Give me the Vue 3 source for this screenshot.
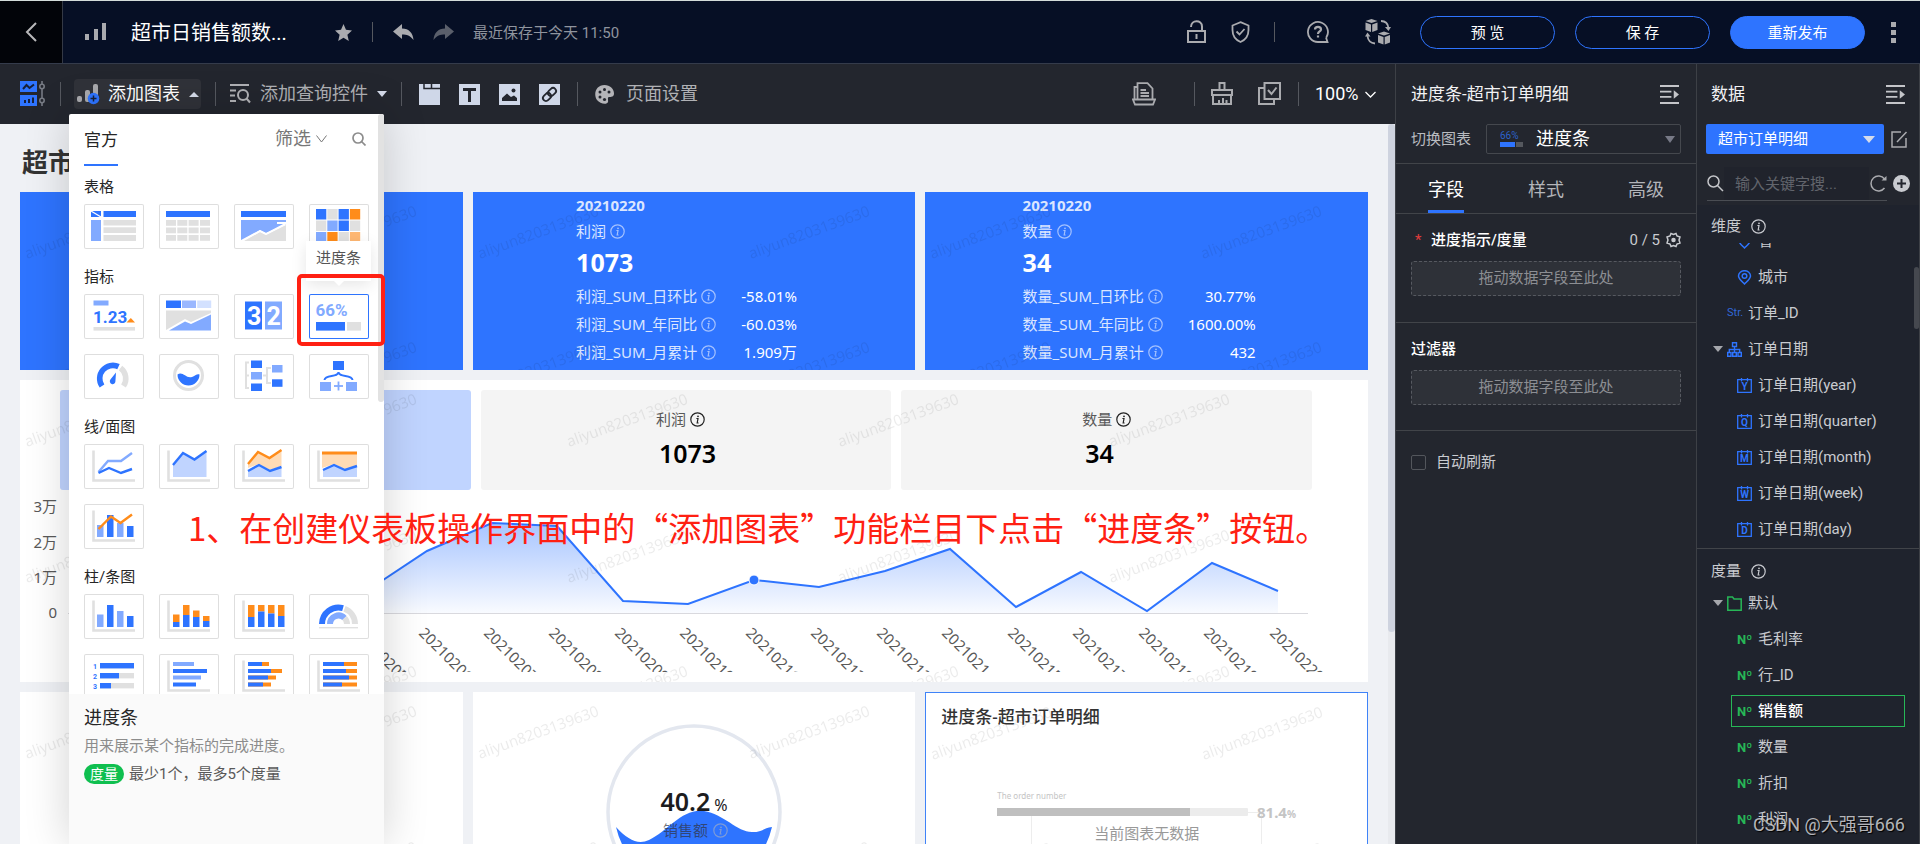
<script setup>
import { ref } from 'vue'

const C = { b: '#2e74ff', l: '#82aaff', g: '#e0e0e0', o: '#ff8c1a', p: '#c0d4ff', po: '#ffdbb5' }
const r = (x, y, w, h, f) => `<rect x="${x}" y="${y}" width="${w}" height="${h}" fill="${f}"/>`
const line = (pts, c, w = 2.4) => `<polyline points="${pts}" fill="none" stroke="${c}" stroke-width="${w}"/>`
const poly = (pts, c) => `<polygon points="${pts}" fill="${c}"/>`
const axis = `<path d="M9.5 6.5V36.5H51" fill="none" stroke="${C.g}" stroke-width="2.6"/>`
const font = 'font-family="Roboto, sans-serif" font-weight="700"'

const art = {
  pivot: r(7, 7, 10, 6, C.b) + line('7,7 17,13', '#fff', 1.4) + r(19.5, 7, 32.5, 6, C.b) + r(7, 16, 10, 21, C.l) +
    r(19.5, 16, 32.5, 5.5, C.g) + r(19.5, 23.3, 32.5, 5.7, C.g) + r(19.5, 31, 32.5, 6, C.g),
  table: r(7, 7, 44, 6, C.b) + [16, 23.5, 31].map(y => [7, 18.3, 29.6, 41].map(x => r(x, y, 10, 5.8, C.g)).join('')).join(''),
  trend: r(7, 7, 45, 6, C.b) + poly('7,16 52,16 52,20 32,29 26,26 7,37', C.l) + poly('10,37 26,28 32,31 52,21 52,37', C.g) +
    line('7,37 26,27 32,30 51,20', '#fff', 1.8) + line('43,19 52,19', '#fff', 2),
  heat: [[C.b, C.g, C.b, C.o], [C.g, C.l, C.b, C.g], [C.l, C.o, C.g, '#ffb873']]
    .map((row, j) => row.map((c, i) => r(7 + i * 11.3, 5 + j * 11.5, 10.3, 10.5, c)).join('')).join(''),
  number: r(9.5, 6.5, 15, 5, C.l) + `<text x="9" y="29" font-size="17" ${font} fill="${C.b}">1.23</text>` +
    poly('42.5,28.5 46.8,24 51,28.5', C.o) + r(9.5, 33, 41.5, 3.6, C.g),
  kpi: r(7, 6.5, 15, 7.5, C.b) + r(23, 6.5, 14, 7.5, '#9bb8ff') + r(38.2, 6.5, 14, 7.5, '#d3e1ff') +
    poly('7,16.5 52,16.5 52,19 32,28 26,25 7,36', C.g) + poly('10,36.6 26,27.5 32,30 52,20.5 52,36.6', C.l),
  flip: r(11, 7.5, 17, 28, C.b) + r(31, 7.5, 17, 28, C.l) +
    `<text x="13" y="31" font-size="25" ${font} fill="#fff">3</text><text x="32.6" y="31" font-size="25" ${font} fill="#fff">2</text>`,
  progress: `<text x="6.5" y="22" font-size="17" ${font} fill="${C.l}">66%</text>` +
    r(7, 28, 29, 8.6, C.b) + r(38, 28, 14, 8.6, C.g),
  gauge: `<path d="M18 32A13.2 13.2 0 0 1 34.5 12.6" fill="none" stroke="${C.b}" stroke-width="5.6"/>` +
    `<path d="M36.5 14A13.2 13.2 0 0 1 39.5 32" fill="none" stroke="${C.g}" stroke-width="5.6"/>` +
    `<path d="M32 18.5L31.4 27.5A2.8 2.8 0 1 1 26.4 25.6Z" fill="${C.b}"/>`,
  liquid: `<circle cx="29.5" cy="21.5" r="14" fill="none" stroke="${C.g}" stroke-width="3"/>` +
    `<path d="M18.5 20.5C24 17 27 25 33 23C36 22 38 19.5 40.5 20.5A11 11 0 0 1 18.5 20.5Z" fill="${C.b}"/>`,
  tree: line('15,8.5 12,8.5 12,34 15,34', C.g, 2) + line('12,21.5 15,21.5', C.g, 2) + line('29,21.5 33,21.5', C.g, 2) +
    line('37,14 33,14 33,29 37,29', C.g, 2) + r(17, 6.5, 11, 7.5, C.b) + r(17, 18, 11, 7.5, C.l) + r(17, 29.5, 11, 7.5, C.b) +
    r(38, 11, 10.5, 7.5, C.l) + r(38, 25.3, 10.5, 7.5, C.b),
  org: r(24, 7, 11, 9, C.b) + `<path d="M15.5 26C16 20 29.5 24 29.5 18C29.5 24 43 20 43.5 26" fill="none" stroke="${C.b}" stroke-width="2"/>` +
    r(11, 28, 11, 9, C.l) + r(37, 28, 11, 9, C.l) + line('25,32 34,32', C.l, 1.8) + line('29.5,27.5 29.5,36.5', C.l, 1.8),
  line: axis + line('14.5,28 24,17 37,17 48,9', C.l) + line('14.5,29 25,24 37,29 48,25', C.b),
  area: axis + poly('14,21 24,9 35.5,15.5 47.5,7 47.5,33 14,33', C.p) + line('14,21 24,9 35.5,15.5 47.5,7', C.b),
  stack: axis + poly('14,20 24,8 35.5,14 47.5,6 47.5,22 36,26 25,20 14,24', C.po) + poly('14,27 25,21 36,27 47.5,23 47.5,33 14,33', C.p) +
    line('14,20 24,8 35.5,14 47.5,6', C.o) + line('14,27 25,21 36,27 47.5,23', C.b),
  percent: axis + poly('13,9 48,9 48,22 36,25 25,20 13,24', C.po) + poly('14,26 25,21 36,26 48,22 48,33 14,33', C.p) +
    line('13,9 48,9', C.o, 2.8) + line('14,26 25,21 36,26 48,22', C.b),
  combo: axis + r(13, 21, 6.5, 12, C.l) + r(23, 11, 6.5, 22, C.b) + r(33, 19, 6.5, 14, C.l) + r(43, 22, 6.5, 11, C.b) +
    line('14.5,25 27,12.5 36.5,19 48,10.5', C.o),
  bar: axis + r(13, 20.5, 6.5, 12.5, C.l) + r(23, 11, 6.5, 22, C.b) + r(33, 17, 6.5, 16, C.l) + r(43, 22, 6.5, 11, C.b),
  stackbar: axis + [[14, 20.5, 28], [24, 11, 21], [34, 16.5, 23], [44, 22, 27]].map(([x, a, m]) =>
    r(x, a, 6.5, m - a, C.o) + r(x, m, 6.5, 33 - m, C.b)).join(''),
  percentbar: axis + [[14, 23], [24, 17.5], [34, 19.5], [44, 22]].map(([x, m]) =>
    r(x, 11, 6.5, m - 11, C.o) + r(x, m, 6.5, 33 - m, C.b)).join(''),
  polar: `<path d="M13 30A16.5 16.5 0 0 1 34 14.2" fill="none" stroke="${C.b}" stroke-width="6"/>` +
    `<path d="M35.5 14.8A16.5 16.5 0 0 1 46 30" fill="none" stroke="${C.g}" stroke-width="6"/>` +
    `<path d="M21 30A8.5 8.5 0 0 1 35.5 24" fill="none" stroke="${C.l}" stroke-width="6"/>` +
    `<path d="M35.5 24A8.5 8.5 0 0 1 38 30" fill="none" stroke="${C.g}" stroke-width="6"/>` + r(10, 33, 39, 1.4, C.g),
  rank: [[11.5, 34, '1'], [21.5, 19, '2'], [31.5, 11, '3']].map(([y, w, t]) => r(16, y - 2.5, 34, 5.4, C.g) +
    r(16, y - 2.5, w, 5.4, C.b) + `<text x="9" y="${y + 3}" font-size="7" ${font} fill="${C.b}">${t}</text>`).join(''),
  hbar: axis + [[8, 21, C.l], [15, 34, C.b], [21.5, 28, C.l], [28.5, 23, C.b]].map(([y, w, c]) => r(14, y, w, 4, c)).join(''),
  hstack: axis + [[8, 14, 21], [15, 23, 34], [21.5, 20, 28], [28.5, 15, 23]].map(([y, m, w]) => r(14, y, w, 4, C.o) + r(14, y, m, 4, C.b)).join(''),
  hpercent: axis + [[8, 21], [15, 23], [21.5, 26], [28.5, 19]].map(([y, m]) => r(14, y, 34, 4, C.o) + r(14, y, m, 4, C.b)).join('')
}

const groups = [
  { name: '表格', items: ['pivot', 'table', 'trend', 'heat'] },
  { name: '指标', items: ['number', 'kpi', 'flip', 'progress', 'gauge', 'liquid', 'tree', 'org'] },
  { name: '线/面图', items: ['line', 'area', 'stack', 'percent', 'combo'] },
  { name: '柱/条图', items: ['bar', 'stackbar', 'percentbar', 'polar', 'rank', 'hbar', 'hstack', 'hpercent'] }
]

const kpis = [
  { name: '销售额', value: '', rows: [] },
  { name: '利润', value: '1073', rows: [['日环比', '-58.01%'], ['年同比', '-60.03%'], ['月累计', '1.909万']] },
  { name: '数量', value: '34', rows: [['日环比', '30.77%'], ['年同比', '1600.00%'], ['月累计', '432']] }
]

const points = [[362, 594], [427, 551], [492, 523], [557, 526], [623, 601], [688, 604], [754, 580], [819, 587], [885, 571],
  [950, 549], [1016, 607], [1081, 572], [1147, 611], [1212, 563], [1278, 591]].map(([x, y]) => [x - 20, y - 490])
const trendLine = points.map(p => p.join(',')).join(' ')
const trendArea = trendLine + ' 1258,123 342,123'
const dates = ['20210205', '20210206', '20210207', '20210208', '20210209', '20210210', '20210211', '20210212', '20210213',
  '20210214', '20210215', '20210217', '20210218', '20210219', '20210220']
const yTicks = [['3万', 17], ['2万', 53], ['1万', 88], ['0', 123]]

const dateParts = [['Y', 'year'], ['Q', 'quarter'], ['M', 'month'], ['W', 'week'], ['D', 'day']]
const measures = ['毛利率', '行_ID', '销售额', '数量', '折扣', '利润']
const tab = ref('字段')
const keyword = ref('')
const auto = ref(false)
</script>

<template>
  <div class="page">
    <svg class="defs" width="0" height="0" aria-hidden="true">
      <defs>
        <pattern id="mark" width="271" height="136" patternUnits="userSpaceOnUse">
          <text x="7" y="67" transform="rotate(-20 7 67)" font-family="Open Sans, sans-serif" font-size="15" fill="#000" fill-opacity=".08">aliyun8203139630</text>
        </pattern>
        <linearGradient id="fade" x1="0" y1="0" x2="0" y2="1">
          <stop offset="0" stop-color="#2e74ff" stop-opacity=".42" />
          <stop offset="1" stop-color="#2e74ff" stop-opacity=".03" />
        </linearGradient>
        <symbol id="info" viewBox="0 0 15 15">
          <circle cx="7.5" cy="7.5" r="6.7" fill="none" stroke="currentColor" stroke-width="1.2" />
          <path d="M6.4 6.5H8L7.2 11H8.6" fill="none" stroke="currentColor" stroke-width="1.2" />
          <circle cx="8" cy="4.3" r=".9" fill="currentColor" />
        </symbol>
        <symbol id="collapse" viewBox="0 0 20 20">
          <path d="M0 1H20M0 7H12M0 12.5H12M0 19H20" stroke="currentColor" stroke-width="2" />
          <path d="M14.5 5.5L20 10L14.5 14.5Z" fill="currentColor" />
        </symbol>
      </defs>
    </svg>

    <header class="top">
      <button class="back" aria-label="返回">
        <svg width="12" height="20" viewBox="0 0 12 20"><path d="M11 1L2 10L11 19" fill="none" stroke="currentColor" stroke-width="2" /></svg>
      </button>
      <svg class="top-bars" width="22" height="18" viewBox="0 0 22 18" fill="currentColor"><path d="M0 11H4V17H0ZM9 6H13V17H9ZM17 0H21V17H17Z" /></svg>
      <h1>超市日销售额数...</h1>
      <button class="ico star" aria-label="收藏"><svg width="17" height="17" viewBox="0 0 24 24" fill="currentColor"><path d="M12 0L15.5 8L24 9L17.5 15L19.5 24L12 19.3L4.5 24L6.5 15L0 9L8.5 8Z" /></svg></button>
      <i class="rule"></i>
      <button class="ico undo" aria-label="撤销"><svg width="21" height="17" viewBox="0 0 21 17" fill="currentColor"><path d="M9 0V4.5C16 4.5 20 9 20.5 16C17 11.5 14 10.5 9 10.5V15L0 7.5Z" /></svg></button>
      <button class="ico redo" aria-label="重做"><svg width="21" height="17" viewBox="0 0 21 17" fill="currentColor"><path d="M12 0V4.5C5 4.5 1 9 .5 16C4 11.5 7 10.5 12 10.5V15L21 7.5Z" /></svg></button>
      <span class="saved">最近保存于今天 11:50</span>
      <div class="top-right">
        <button class="ico" aria-label="锁定"><svg width="20" height="24" viewBox="0 0 20 24" fill="none" stroke="currentColor" stroke-width="2"><rect x="1" y="11" width="17" height="11" /><path d="M4 7C4 -.5 15 -.5 15 6.5V11M9.5 14V19" /></svg></button>
        <button class="ico shield" aria-label="权限"><svg width="19" height="22" viewBox="0 0 19 22" fill="none" stroke="currentColor" stroke-width="1.8"><path d="M9.5 1.2L17.5 4.5V9C17.5 14.5 14 19 9.5 21C5 19 1.5 14.5 1.5 9V4.5Z" /><path d="M5.5 10.5L8.5 13.5L13.5 8" /></svg></button>
        <i class="rule"></i>
        <button class="ico help" aria-label="帮助"><svg width="22" height="22" viewBox="0 0 22 22" fill="none" stroke="currentColor" stroke-width="1.8"><path d="M19.3 16.5A10 10 0 1 0 11 21H20.5L19 16.5" /><path d="M8 8.5C8 5 14 5 14 8.5C14 10.5 11 10.5 11 13M11 14.5V16.5" stroke-width="2.2" /></svg></button>
        <button class="ico cubes" aria-label="切换"><svg width="26" height="26" viewBox="0 0 26 26"><g fill="currentColor"><path d="M6.5 0L12.5 2L6.5 4L.5 2ZM.5 3.5L6 5.5V13L.5 11ZM7.2 5.5L12.5 3.5V11L7.2 13ZM19 12.5L25 14.5L19 16.5L13 14.5ZM13 16L18.5 18V25.5L13 23.5ZM19.7 18L25 16V23.5L19.7 25.5Z" /><path d="M20 8H26L23.5 12ZM0 17.5H5.5L2.5 13.5Z" /></g><path d="M16 2C21 2 23 5 23.5 9M2.5 17C3 22 5 24 10 24.5" fill="none" stroke="currentColor" stroke-width="1.8" /></svg></button>
        <button class="pill">预 览</button>
        <button class="pill">保 存</button>
        <button class="pill solid">重新发布</button>
        <button class="ico more" aria-label="更多"><svg width="5" height="21" viewBox="0 0 5 21" fill="currentColor"><path d="M0 0H5V5H0ZM0 8H5V13H0ZM0 16H5V21H0Z" /></svg></button>
      </div>
    </header>

    <div class="body">
      <main>
        <nav class="tools">
          <svg class="t-logo" width="25" height="26" viewBox="0 0 25 26"><path d="M0 0H17V11H0ZM0 14H17V25H0Z" fill="#2e74ff" /><path d="M3 8L6.5 4L9.5 7L14 3.5" fill="none" stroke="#16203a" stroke-width="2" /><path d="M5 22V19M9 22V18M13 22V16.5" stroke="#16203a" stroke-width="2" /><g fill="none" stroke="#777b84" stroke-width="1.6"><path d="M22 0V3M22 8V17M22 22V25" /><circle cx="22" cy="5.5" r="2.2" /><circle cx="22" cy="19.5" r="2.2" /></g></svg>
          <i class="rule"></i>
          <button class="add">
            <svg width="23" height="22" viewBox="0 0 23 22"><g fill="#a9a9ad"><rect y="13" width="5" height="6" rx="2" /><rect x="8" y="7" width="5" height="12" rx="2" /><rect x="16" y="1" width="5" height="16" rx="2" /></g><circle cx="16.5" cy="15.5" r="5.8" fill="#2e74ff" /><path d="M13.5 15.5H19.5M16.5 12.5V18.5" stroke="#16203a" stroke-width="1.5" /></svg>
            <span>添加图表</span><b class="tri up"></b>
          </button>
          <i class="rule"></i>
          <button class="query">
            <svg width="21" height="20" viewBox="0 0 21 20" fill="none" stroke="currentColor" stroke-width="2"><path d="M0 1H19M0 6.5H6M0 11.5H5M0 17H6" /><circle cx="13" cy="11" r="5" /><path d="M16.5 14.5L20 18.5" /></svg>
            <span>添加查询控件</span><b class="tri down"></b>
          </button>
          <i class="rule"></i>
          <button class="sq" aria-label="标签页"><svg width="21" height="21" viewBox="0 0 21 21"><path d="M0 0H21V21H0Z" fill="#cfd7e8" /><path d="M5 0V4.5H21M12.5 0V4.5" fill="none" stroke="#23262e" stroke-width="1.5" /></svg></button>
          <button class="sq" aria-label="文本"><svg width="21" height="21" viewBox="0 0 21 21"><path d="M0 0H21V21H0Z" fill="#cfd7e8" /><path d="M4 5.5H17M10.5 5.5V18" stroke="#23262e" stroke-width="3" /></svg></button>
          <button class="sq" aria-label="图片"><svg width="21" height="21" viewBox="0 0 21 21"><path d="M0 0H21V21H0Z" fill="#cfd7e8" /><path d="M3 17V14L8 9.5L12 13L15 11.5L18 14V17Z" fill="#23262e" /><circle cx="14.5" cy="6.5" r="2" fill="#23262e" /></svg></button>
          <button class="sq" aria-label="链接"><svg width="21" height="21" viewBox="0 0 21 21"><path d="M0 0H21V21H0Z" fill="#cfd7e8" /><g fill="none" stroke="#23262e" stroke-width="1.8" transform="rotate(-45 10.5 10.5)"><rect x="2.5" y="7.5" width="9" height="6" rx="3" /><rect x="9.5" y="7.5" width="9" height="6" rx="3" /></g></svg></button>
          <i class="rule"></i>
          <button class="palette">
            <svg width="19" height="19" viewBox="0 0 19 19"><path d="M9.5 0C15 0 19 4 19 8.5C19 12 16 12 14 12C12 12.5 13.5 15 13 17C12 20 5 19 2 15C-2 9 1 0 9.5 0Z" fill="#b4b4b8" /><g fill="#23262e"><circle cx="5" cy="7" r="1.5" /><circle cx="9.5" cy="4.5" r="1.5" /><circle cx="14" cy="7" r="1.5" /><circle cx="5" cy="12" r="1.5" /><circle cx="9.5" cy="14.5" r="1.6" /></g></svg>
            <span>页面设置</span>
          </button>
          <div class="tools-right">
            <button class="ico" aria-label="打印"><svg width="24" height="24" viewBox="0 0 24 24" fill="none" stroke="currentColor" stroke-width="1.8"><path d="M2.5 17V5H5M5.5 17V1.2H15.5L20.5 6.5V17M8.5 8H14M8.5 11H17M8.5 14H17M1 17.5H23L21 22.5H3Z" /></svg></button>
            <i class="rule"></i>
            <button class="ico brush" aria-label="格式刷"><svg width="22" height="24" viewBox="0 0 22 24" fill="none" stroke="currentColor" stroke-width="2"><path d="M8.5 8V1H13.5V8M1 8H21V13H1ZM2 13V22H20V13M8 22V18M12 22V16M15.5 22V18" /></svg></button>
            <button class="ico" aria-label="批量"><svg width="23" height="24" viewBox="0 0 23 24" fill="none" stroke="currentColor" stroke-width="2"><path d="M6.5 1H22V17H6.5ZM6.5 6H1V22H16V17M10 8L13.5 12L18.5 5.5" /></svg></button>
            <i class="rule"></i>
            <label class="zoom"><select aria-label="缩放"><option>100%</option></select><svg width="11" height="7" viewBox="0 0 11 7"><path d="M.5 1L5.5 6L10.5 1" fill="none" stroke="currentColor" stroke-width="1.3" /></svg></label>
          </div>
        </nav>

        <div class="canvas">
          <div class="sheet">
            <h2>超市日销售额数据</h2>
            <div class="cards kpis">
              <section v-for="k in kpis" :key="k.name" class="card kpi">
                <div v-if="k.value" class="kpi-in">
                  <strong class="kdate">20210220</strong>
                  <span class="kname">{{ k.name }}<svg class="info"><use href="#info" /></svg></span>
                  <strong class="kval">{{ k.value }}</strong>
                  <dl>
                    <template v-for="row in k.rows" :key="row[0]">
                      <dt>{{ k.name }}_SUM_{{ row[0] }}<svg class="info"><use href="#info" /></svg></dt>
                      <dd>{{ row[1] }}</dd>
                    </template>
                  </dl>
                </div>
                <svg class="mark"><rect width="100%" height="100%" fill="url(#mark)" /></svg>
              </section>
            </div>

            <section class="card trend">
              <div class="boxes">
                <div class="box on"></div>
                <div class="box"><div><span>利润<svg class="info"><use href="#info" /></svg></span><strong>1073</strong></div></div>
                <div class="box"><div><span>数量<svg class="info"><use href="#info" /></svg></span><strong>34</strong></div></div>
              </div>
              <svg class="plot" viewBox="0 0 1348 182">
                <text v-for="t in yTicks" :key="t[0]" x="37" :y="t[1] + 5" text-anchor="end" class="tick">{{ t[0] }}</text>
                <path d="M48 123.5H1288" stroke="#d9d9de" />
                <polygon :points="trendArea" fill="url(#fade)" />
                <polyline :points="trendLine" fill="none" stroke="#2e74ff" stroke-width="2" />
                <circle cx="734" cy="90" r="5" fill="#2e74ff" stroke="#fff" />
                <text v-for="(d, i) in dates" :key="d" class="tick" :transform="`translate(${points[i][0] - 9} 144) rotate(45)`">{{ d }}</text>
              </svg>
              <svg class="mark"><rect width="100%" height="100%" fill="url(#mark)" /></svg>
            </section>

            <div class="cards lower">
              <section class="card"><svg class="mark"><rect width="100%" height="100%" fill="url(#mark)" /></svg></section>
              <section class="card liquid">
                <div class="ball">
                  <svg width="176" height="176" viewBox="0 0 176 176">
                    <circle cx="88" cy="88" r="86" fill="none" stroke="#e3e7ef" stroke-width="3.5" />
                    <path d="M10 103C22 116 32 121 43 116C62 107 76 84 98 87C118 90 132 109 147 108C156 108 158 104 166 103A80 80 0 0 1 10 103Z" fill="#2e74ff" />
                  </svg>
                  <div class="ball-text"><div><strong>40.2</strong><em>%</em></div><span>销售额<svg class="info"><use href="#info" /></svg></span></div>
                </div>
                <svg class="mark"><rect width="100%" height="100%" fill="url(#mark)" /></svg>
              </section>
              <section class="card chosen">
                <h3>进度条-超市订单明细</h3>
                <div class="demo">
                  <small>The order number</small>
                  <div class="demo-row"><div class="bar"><i></i></div><b>81.4<small>%</small></b></div>
                  <p>当前图表无数据</p>
                </div>
                <svg class="mark"><rect width="100%" height="100%" fill="url(#mark)" /></svg>
              </section>
            </div>
          </div>
          <div class="scroll"><i></i></div>
        </div>
      </main>

      <aside class="config">
        <div class="chead"><h2>进度条-超市订单明细</h2><button class="ico" aria-label="收起"><svg class="fold"><use href="#collapse" /></svg></button></div>
        <label class="switch"><span>切换图表</span>
          <div class="sel">
            <svg width="23" height="18" viewBox="0 0 23 18"><text x="0" y="9" font-size="10" font-family="Roboto" fill="#2c62c9">66%</text><rect y="12" width="15" height="5" fill="#2e74ff" /><rect x="16" y="12" width="7" height="5" fill="#55585e" /></svg>
            <select><option>进度条</option></select><b class="tri down"></b>
          </div>
        </label>
        <div class="tabs"><button v-for="t in ['字段', '样式', '高级']" :key="t" :class="{ on: tab === t }" @click="tab = t">{{ t }}</button></div>
        <section>
          <div class="shead"><i>*</i><h3>进度指示/度量</h3><span>0 / 5</span>
            <svg width="15" height="16" viewBox="0 0 15 16" fill="none" stroke="currentColor" stroke-width="1.5"><path d="M5 1.5L7.5 2.5L10 1.5L11 4L14 5L13 8L14 11L11 12L10 14.5L7.5 13.5L5 14.5L4 12L1 11L2 8L1 5L4 4Z" /><circle cx="7.5" cy="8" r="1.5" fill="currentColor" /></svg></div>
          <div class="drop">拖动数据字段至此处</div>
        </section>
        <section>
          <div class="shead"><h3>过滤器</h3></div>
          <div class="drop">拖动数据字段至此处</div>
        </section>
        <label class="auto"><input v-model="auto" type="checkbox"><span>自动刷新</span></label>
      </aside>

      <aside class="data">
        <div class="chead"><h2>数据</h2><button class="ico" aria-label="收起"><svg class="fold"><use href="#collapse" /></svg></button></div>
        <div class="source">
          <div class="sel"><select aria-label="数据集"><option>超市订单明细</option></select><b class="tri down"></b></div>
          <button class="ico" aria-label="编辑"><svg width="17" height="17" viewBox="0 0 17 17" fill="none" stroke="currentColor" stroke-width="1.5"><path d="M10 1H1V16H15V7M6 11L15.5 1" /></svg></button>
        </div>
        <div class="search">
          <div class="search-in">
            <svg width="17" height="17" viewBox="0 0 17 17" fill="none" stroke="currentColor" stroke-width="1.5"><circle cx="6.5" cy="6.5" r="5.5" /><path d="M10.5 10.5L16 16" /></svg>
            <input v-model="keyword" aria-label="搜索" placeholder="输入关键字搜...">
            <button class="ico" aria-label="刷新"><svg width="17" height="17" viewBox="0 0 17 17"><path d="M14.5 13A7.5 7.5 0 1 1 14.5 4" fill="none" stroke="currentColor" stroke-width="1.5" /><path d="M11.5 5.5H16.5V1Z" fill="currentColor" /></svg></button>
          </div>
          <button class="ico" aria-label="新建"><svg width="17" height="17" viewBox="0 0 17 17"><circle cx="8.5" cy="8.5" r="8.5" fill="#c9cbd0" /><path d="M4 8.5H13M8.5 4V13" stroke="#23262e" stroke-width="2" /></svg></button>
        </div>

        <div class="dims">
          <h4>维度<svg class="info"><use href="#info" /></svg></h4>
          <ul>
            <li class="l2"><svg class="fi" viewBox="0 0 15 15" fill="none" stroke="#2e74ff" stroke-width="1.5"><path d="M7.5 14C4 10.5 1.5 8.5 1.5 6A6 5.3 0 0 1 13.5 6C13.5 8.5 11 10.5 7.5 14Z" /><circle cx="7.5" cy="6" r="2.3" /></svg>省</li>
            <li class="l2"><svg class="fi" viewBox="0 0 15 15" fill="none" stroke="#2e74ff" stroke-width="1.5"><path d="M7.5 14C4 10.5 1.5 8.5 1.5 6A6 5.3 0 0 1 13.5 6C13.5 8.5 11 10.5 7.5 14Z" /><circle cx="7.5" cy="6" r="2.3" /></svg>城市</li>
            <li class="l1"><span class="str">Str.</span>订单_ID</li>
            <li class="l1 open"><b class="tri down"></b><svg class="fi" viewBox="0 0 15 15" fill="none" stroke="#2e74ff" stroke-width="1.4"><path d="M5.5 .7H9.5V4.5H5.5ZM7.5 4.5V10M2.3 10.5V7.5H12.7V10.5M.7 10.5H4V14.3H.7ZM5.7 10.5H9.3V14.3H5.7ZM11 10.5H14.3V14.3H11Z" /></svg>订单日期</li>
            <li v-for="d in dateParts" :key="d[1]" class="l2"><svg class="fi" viewBox="0 0 15 15"><path d="M.7 1.7H14.3V14.3H.7ZM4.5 0V3.5M10.5 0V3.5" fill="none" stroke="#2e74ff" stroke-width="1.3" /><text x="7.5" y="12" text-anchor="middle" font-size="10" font-weight="700" font-family="Roboto" fill="#2e74ff">{{ d[0] }}</text></svg>订单日期({{ d[1] }})</li>
          </ul>
          <i class="thumb"></i>
        </div>
        <div class="meas">
          <h4>度量<svg class="info"><use href="#info" /></svg></h4>
          <ul>
            <li class="l1 open"><b class="tri down"></b><svg class="fi" viewBox="0 0 15 15"><path d="M.8 1H5.5L7 3H14.2V14.2H.8Z" fill="none" stroke="#27b757" stroke-width="1.5" /></svg>默认</li>
            <li v-for="m in measures" :key="m" class="l2" :class="{ picked: m === '销售额' }"><span class="no">Nº</span>{{ m }}</li>
          </ul>
        </div>
      </aside>
    </div>

    <div class="pop">
      <div class="list">
        <div class="pop-head"><button class="official">官方</button><button class="filter">筛选<svg width="11" height="8" viewBox="0 0 11 8"><path d="M.5 .5L5.5 7L10.5 .5" fill="none" stroke="currentColor" /></svg></button>
          <button class="find" aria-label="搜索"><svg width="14" height="14" viewBox="0 0 14 14" fill="none" stroke="currentColor" stroke-width="1.7"><circle cx="6" cy="6" r="5" /><path d="M9.5 9.5L13.5 13.5" /></svg></button></div>
        <section v-for="g in groups" :key="g.name">
          <h4>{{ g.name }}</h4>
          <div class="tiles">
            <button v-for="k in g.items" :key="k" class="tile" :class="{ sel: k === 'progress' }" :aria-label="k">
              <svg width="60" height="45" viewBox="0 0 60 45" v-html="art[k]"></svg>
              <span v-if="k === 'progress'" class="tip">进度条</span>
            </button>
          </div>
        </section>
        <i class="pop-thumb"></i>
      </div>
      <footer>
        <h3>进度条</h3>
        <p>用来展示某个指标的完成进度。</p>
        <div><b>度量</b><span>最少1个，最多5个度量</span></div>
      </footer>
    </div>

    <div class="frame"></div>
    <p class="note">1、在创建仪表板操作界面中的“添加图表”功能栏目下点击“进度条”按钮。</p>
    <span class="csdn">CSDN @大强哥666</span>
  </div>
</template>

<style>
body { margin: 0; }
</style>

<style scoped>
* { box-sizing: border-box; }
.page { position: relative; display: flex; flex-direction: column; height: 100vh; overflow: hidden; background: #23262e; color: #c9cbd0; font: 15px/20px Roboto, "Noto Sans CJK SC", sans-serif; }
.defs { position: absolute; }
h1, h2, h3, h4, p, ul, dl, dd { margin: 0; padding: 0; font-weight: 400; font-size: inherit; }
li { list-style: none; }
button, select, input { font: inherit; color: inherit; background: none; border: 0; padding: 0; margin: 0; }
button { display: flex; align-items: center; white-space: nowrap; }
select { appearance: none; flex: 1; min-width: 0; outline: 0; }
svg { flex: none; }
.ico { color: #aaabaf; }
.rule { width: 1px; height: 24px; background: #55585f; flex: none; }
.info { width: 15px; height: 15px; }
.tri { width: 0; height: 0; border: 5px solid transparent; flex: none; }
.tri.up { border-top: 0; border-bottom-color: #d5dbea; }
.tri.down { border-bottom: 0; border-top: 6px solid #d5dbea; }

.top { display: flex; align-items: center; height: 64px; flex: none; background: #060f25; border-top: 1px solid #d3dcda; border-bottom: 1px solid #343b4b; }
.back { width: 63px; height: 62px; padding-left: 25px; background: #020409; border-right: 1px solid #343945; color: #b8b8ba; }
.top-bars { margin-left: 22px; color: #a9aaae; }
.top h1 { margin-left: 24px; width: 204px; font-size: 20px; line-height: 30px; padding-top: 2px; color: #fff; }
.top .rule { height: 20px; }
.star { margin-right: 20px; }
.undo { margin-left: 20px; }
.redo { margin: 0 19px; color: #5a5f6b; }
.saved { padding-top: 2px; color: #8f949e; }
.top-right { display: flex; align-items: center; margin-left: auto; padding-right: 24px; }
.shield { margin: 0 24px; }
.help { margin: 0 36px 0 32px; }
.pill { width: 135px; height: 33px; justify-content: center; border: 1px solid #2e74ff; border-radius: 17px; color: #fff; margin-left: 20px; padding-top: 2px; }
.cubes + .pill { margin-left: 29px; }
.solid { background: #2e74ff; }
.more { margin-left: 26px; }

.body { display: flex; flex: 1; min-height: 0; }
main { flex: 1; min-width: 0; display: flex; flex-direction: column; }
.tools { display: flex; align-items: center; height: 60px; flex: none; padding-left: 20px; font-size: 18px; color: #b0b1b5; }
.t-logo { margin-right: 15px; }
.add { height: 30px; margin: 0 14px 0 13px; padding: 0 2px 0 3px; border-radius: 4px; background: #303239; color: #fff; }
.add svg { margin-right: 8px; }
.add .tri { margin-left: 9px; }
.query { margin: 0 14px; }
.query svg { margin-right: 9px; }
.query .tri { margin-left: 9px; }
.sq { margin-left: 19px; }
.rule + .sq { margin-left: 17px; }
.sq + .rule { margin-left: 17px; }
.palette { margin-left: 17px; }
.palette svg { margin-right: 12px; }
.tools-right { display: flex; align-items: center; margin-left: auto; padding-right: 19px; }
.tools-right .rule { margin: 0 16px; }
.tools-right .ico + .rule { margin-left: 17px; }
.tools-right .ico:first-child { margin-right: 21px; }
.brush { margin-right: 25px; }
.zoom { display: flex; align-items: center; gap: 3px; color: #fff; }
.zoom select { width: 47px; }

.canvas { flex: 1; min-height: 0; display: flex; background: #eff1f5; color: #333; font-family: "Noto Sans", "Noto Sans CJK SC", sans-serif; overflow: hidden; }
.sheet { flex: 1; min-width: 0; padding: 0 20px; display: flex; flex-direction: column; gap: 10px; }
.sheet > * { flex: none; }
.sheet > h2 { height: 58px; padding: 20px 2px 0; font: 700 26px/34px "Noto Sans CJK SC", sans-serif; color: #333; }
.cards { display: grid; grid-template-columns: repeat(3, minmax(0, 1fr)); gap: 10px; }
.card { position: relative; background: #fff; }
.mark { position: absolute; inset: 0; width: 100%; height: 100%; pointer-events: none; }
.kpi { height: 178px; background: #2e74ff; color: #dbe6ff; }
.kpi-in { display: flex; flex-direction: column; width: max-content; margin: 0 auto; padding: 2px 15px 0 0; }
.kpi .info { color: #a5c2ff; margin-left: 4px; }
.kdate { line-height: 22px; }
.kname { display: flex; align-items: center; line-height: 30px; }
.kval { font-size: 25px; line-height: 32px; color: #fff; }
.kpi dl { margin-top: 4px; display: grid; grid-template-columns: auto auto; column-gap: 25px; line-height: 28px; }
.kpi dt { display: flex; align-items: center; }
.kpi dd { text-align: right; color: #fff; }
.trend { height: 302px; padding-top: 10px; }
.boxes { display: grid; grid-template-columns: repeat(3, minmax(0, 1fr)); gap: 10px; padding: 0 56px 0 40px; }
.box { height: 100px; padding-top: 17px; border-radius: 3px; background: #f4f4f4; display: flex; justify-content: center; color: #595959; }
.box.on { background: #c0d4ff; }
.box span { display: flex; align-items: center; line-height: 24px; }
.box .info { color: #222; margin-left: 4px; }
.box strong { display: block; padding-left: 3px; font-size: 25px; line-height: 44px; font-weight: 600; color: #000; }
.plot { display: block; width: 100%; }
.tick { font-size: 15px; fill: #595959; }
.lower .card { height: 300px; }
.liquid { display: flex; justify-content: center; padding-top: 32px; }
.ball { position: relative; width: 176px; height: 176px; }
.ball-text { position: absolute; inset: 61px 0 auto; text-align: center; color: #1c1c1e; }
.ball-text div { line-height: 32px; }
.ball-text strong { font-size: 25px; font-weight: 600; }
.ball-text em { font-style: normal; font-size: 16px; margin-left: 4px; }
.ball-text span { display: flex; justify-content: center; align-items: center; padding-left: 3px; line-height: 18px; color: rgba(50, 50, 60, .7); }
.ball-text .info { margin-left: 5px; color: #7d9bd8; }
.chosen { border: 1px solid #3f83f8; padding: 13px 15px; }
.chosen h3 { font-size: 17px; font-weight: 500; line-height: 22px; color: #333; }
.demo { margin: 62px 56px 0; color: #c4c4c4; }
.demo small { display: block; font-size: 8px; line-height: 12px; }
.demo-row { display: flex; align-items: center; gap: 9px; height: 20px; }
.bar { flex: 1; height: 8px; background: #ececec; border-radius: 1px; }
.bar i { display: block; width: 77%; height: 8px; background: #bfbfbf; }
.demo b { font-size: 15px; display: flex; align-items: baseline; }
.demo b small { font-size: 10px; }
.demo p { margin: -10px 34px 0; padding-top: 10px; height: 60px; border: 1px solid #ededed; text-align: center; color: #999; }
.scroll { width: 7px; background: #e8eaee; }
.scroll i { display: block; height: 508px; background: #ced3df; border-radius: 4px; }

.config, .data { flex: none; border-left: 1px solid #3d4046; }
.config { width: 301px; }
.data { width: 224px; background: #23262e; border-right: 1px solid #3d4046; display: flex; flex-direction: column; }
.chead { display: flex; justify-content: space-between; align-items: center; height: 60px; padding: 0 17px 0 15px; color: #f2f2f4; }
.chead h2 { font-size: 17px; line-height: 24px; }
.fold { width: 19px; height: 19px; color: #c4c5c9; }
.switch { display: flex; align-items: center; padding: 0 15px 9px; border-bottom: 1px solid #414449; color: #b9bbc0; }
.switch > span { width: 75px; white-space: nowrap; }
.switch .sel { flex: 1; display: flex; align-items: center; height: 30px; padding: 0 5px 0 13px; border: 1px solid #45484e; border-radius: 2px; }
.switch select { margin-left: 13px; font-size: 18px; color: #fff; }
.switch .tri { border-top-color: #777986; border-top-width: 7px; }
.tabs { display: flex; justify-content: space-between; height: 50px; padding: 0 32px; border-bottom: 1px solid #414449; }
.tabs button { height: 49px; padding-top: 5px; font-size: 18px; border-bottom: 3px solid transparent; color: #b3b5ba; }
.tabs .on { color: #fff; border-color: #2e74ff; }
.config section { padding: 14px 15px 26px; border-bottom: 1px solid #414449; }
.config section + section { padding-bottom: 25px; }
.shead { display: flex; align-items: center; height: 24px; margin-bottom: 9px; }
.shead h3 { flex: 1; font-weight: 500; color: #fff; }
.shead i { width: 20px; padding-left: 4px; color: #e03c3c; font-style: normal; }
.shead svg { margin-left: 6px; }
.drop { height: 35px; border: 1px dashed #565960; border-radius: 3px; background: #2e3138; color: #8c8e93; text-align: center; line-height: 33px; }
.auto { display: flex; align-items: center; gap: 10px; padding: 21px 15px; }
.auto input { appearance: none; width: 15px; height: 15px; border: 1px solid #53565c; border-radius: 2px; }
.auto input:checked { background: #2e74ff; }

.data .chead { padding: 0 14px; }
.source { display: flex; align-items: center; gap: 7px; padding-left: 9px; }
.source .sel { width: 178px; height: 30px; display: flex; align-items: center; padding: 0 9px 0 12px; background: #2e74ff; border-radius: 2px; color: #fff; }
.source .tri { border-width: 7px 6px 0; }
.search { display: flex; align-items: center; gap: 6px; height: 47px; padding-left: 10px; margin-bottom: 4px; }
.search-in { display: flex; align-items: center; width: 180px; height: 34px; margin-top: 13px; border-bottom: 1px solid #4a4d53; color: #c4c5c9; }
.search > .ico { margin-top: 12px; }
.search input { width: 145px; height: 33px; margin-right: 1px; padding-left: 11px; background: #20232c; outline: 0; }
.search input::placeholder { color: #62656c; opacity: 1; }
.dims, .meas { background: #1f232d; }
.dims { position: relative; height: 344px; border-bottom: 1px solid #414449; }
h4 { display: flex; align-items: center; }
.data h4 { height: 38px; padding: 4px 14px 0; gap: 10px; }
.dims ul { height: 304px; overflow: hidden; display: flex; flex-direction: column; justify-content: flex-end; }
.data li { display: flex; align-items: center; flex: none; height: 36px; white-space: nowrap; }
.data .l1 { padding-left: 30px; }
.data .l2 { padding-left: 40px; }
.data .open { padding-left: 16px; }
.open .tri { margin-right: 4px; border-top-color: #a5a7ac; }
.fi { width: 15px; height: 15px; margin-right: 6px; }
.str { width: 21px; font-size: 11px; color: #3168d8; }
.no { width: 21px; font: 700 13px/15px Roboto, sans-serif; color: #27b757; }
.thumb { position: absolute; right: 0; top: 62px; width: 5px; height: 62px; border-radius: 3px; background: #45484f; }
.meas { flex: 1; }
.meas h4 { height: 36px; padding-top: 8px; }
.meas .picked { height: 32px; margin: 2px 14px 2px 34px; padding-left: 5px; border: 1px solid #27b757; color: #fff; font-weight: 500; }

.pop { position: absolute; left: 69px; top: 114px; bottom: 0; width: 315px; display: flex; flex-direction: column; background: #fff; color: #262626; border-radius: 2px 2px 0 0; box-shadow: 0 0 45px rgba(0, 0, 0, .18); }
.list { position: relative; flex: 1; min-height: 0; overflow: hidden; padding: 0 15px; }
.pop-head { display: flex; height: 60px; }
.official { height: 52px; padding-top: 1px; font-size: 17px; border-bottom: 2px solid #2e74ff; }
.filter { height: 49px; margin-left: auto; font-size: 18px; color: #777; gap: 5px; }
.find { height: 50px; margin: 0 3px 0 25px; color: #8c8c8c; }
.pop h4 { height: 30px; padding-bottom: 4px; }
.tiles { display: grid; grid-template-columns: repeat(4, 60px); gap: 15px; margin-bottom: 15px; }
.tile { position: relative; height: 45px; border-radius: 2px; box-shadow: inset 0 0 0 1px #dedede; }
.tile.sel { box-shadow: inset 0 0 0 1px #2e74ff; }
.tip { position: absolute; left: -3px; bottom: 58px; width: 65px; height: 40px; line-height: 35px; text-align: center; background: #fff; color: #555; box-shadow: 0 4px 16px rgba(0, 0, 0, .1); }
.tip::after { content: ""; position: absolute; left: 28px; bottom: -5px; border: 5px solid transparent; border-bottom: 0; border-top-color: #fff; }
.pop-thumb { position: absolute; right: 0; top: 0; width: 6px; height: 288px; background: #e2e2e2; border-radius: 3px; }
.pop footer { height: 150px; padding: 11px 15px; background: #fafafa; }
.pop footer h3 { font-size: 18px; line-height: 26px; }
.pop footer p { margin: 5px 0 8px; color: #8c8c8c; }
.pop footer div { display: flex; align-items: center; gap: 5px; color: #595959; }
.pop footer b { width: 40px; height: 20px; border-radius: 10px; background: #0fbf4f; color: #fff; font-size: 14px; font-weight: 400; text-align: center; }

.frame { position: absolute; left: 297px; top: 274px; width: 88px; height: 72px; border: 4px solid #ff2012; border-radius: 5px; }
.note { position: absolute; left: 188px; top: 504px; white-space: nowrap; font: 33px/46px "Noto Sans CJK SC", sans-serif; color: #ff2012; }
.csdn { position: absolute; right: 15px; bottom: 6px; font-size: 18px; line-height: 26px; color: rgba(225, 225, 228, .8); text-shadow: 1px 1px 1px #000; }
</style>
